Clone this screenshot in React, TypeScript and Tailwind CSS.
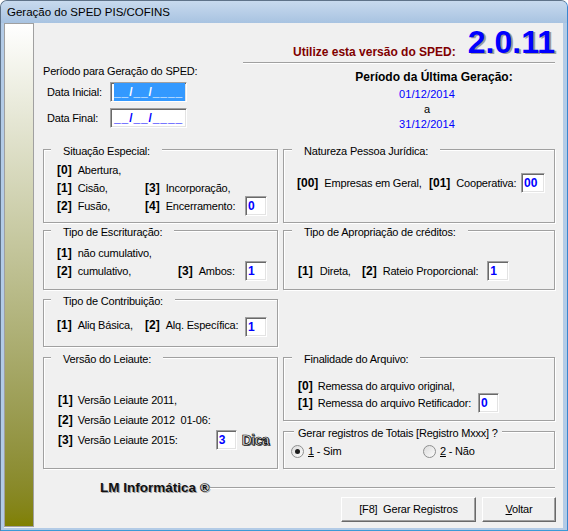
import type { ReactNode } from "react";

const fieldClass =
  "flex h-[20px] items-center border border-t-[#a0a0a0] border-l-[#a0a0a0] border-r-white border-b-white bg-white pl-[2px] text-[12px] font-bold tracking-normal text-[#0000ff] shadow-[inset_1px_1px_0_#696969,inset_-1px_-1px_0_#e3e3e3]";

const Bracket = ({ children }: { children: ReactNode }) => (
  <span className="text-[12px] font-bold tracking-normal">{children}</span>
);

const Opt = ({ k, label, gap = "gap-[6px]" }: { k: string; label: string; gap?: string }) => (
  <span className={`flex items-center whitespace-pre ${gap}`}>
    <Bracket>[{k}]</Bracket>
    <span>{label}</span>
  </span>
);

const Field = ({ value, width = "w-[22px]", className = "" }: { value: string; width?: string; className?: string }) => (
  <div className={`${fieldClass} ${width} ${className}`}>{value}</div>
);

type GroupProps = {
  title: string;
  className?: string;
  titleClass?: string;
  children?: ReactNode;
};

const Group = ({ title, className = "", titleClass = "left-[7px] px-[12px]", children }: GroupProps) => (
  <div
    className={`relative border border-[#a0a0a0] shadow-[1px_1px_0_#ffffff,inset_1px_1px_0_#ffffff] ${className}`}
  >
    <span className={`absolute -top-[6px] bg-[#f0f0f0] leading-[14px] whitespace-nowrap ${titleClass}`}>{title}</span>
    {children}
  </div>
);

const Radio = ({ checked }: { checked?: boolean }) => (
  <span className="flex h-[13px] w-[13px] items-center justify-center rounded-full border border-[#8e8f8f] bg-gradient-to-br from-[#dcdcdc] to-[#fbfbfb]">
    {checked && <span className="h-[5px] w-[5px] rounded-full bg-[#1c1c1c]" />}
  </span>
);

const Etched = ({ className = "" }: { className?: string }) => (
  <div className={`h-[2px] border-t border-b border-t-[#a0a0a0] border-b-white ${className}`} />
);

export default function App() {
  return (
    <div className="flex h-[531px] w-[568px] flex-col overflow-hidden rounded-t-[7px] border border-[#5f7389] border-r-[#3b86cf] border-b-[#3b9ad6] bg-[#b3cbe6] font-['Liberation_Sans',Arial,sans-serif] text-[11px] tracking-[-0.2px] text-black">
      {/* title bar */}
      <div className="flex h-[22px] shrink-0 items-center bg-gradient-to-b from-[#c8daee] to-[#a8c3e1] pl-[6px] pt-[1px] text-[11.5px] tracking-normal text-black">
        Geração do SPED PIS/COFINS
      </div>

      <div className="flex min-h-0 flex-1 pb-[2px] pl-[3px] pr-[4px]">
        <div className="flex flex-1 bg-[#f0f0f0]">
          <div className="mb-[1px] w-[30px] shrink-0 border border-[#a0a0a0] bg-gradient-to-b from-white to-[#808000]" />

          <div className="flex flex-1 flex-col pl-[9px] pr-[8px]">
            {/* header */}
            <div className="flex h-[126px] flex-col">
              <div className="flex h-[39px] items-start justify-end">
                <span className="mt-[23px] text-[12px] font-bold leading-none tracking-normal text-[#800000]">
                  Utilize esta versão do SPED:
                </span>
                <span className="ml-[12px] mt-[3px] text-[32px] font-bold leading-none tracking-normal text-[#0000ff] [text-shadow:2px_1px_0_#9c9c9c]">
                  2.0.11
                </span>
              </div>
              <Etched className="ml-[200px]" />
              <div className="flex">
                <div className="w-[235px]">
                  <div className="leading-[14px]">Período para Geração do SPED:</div>
                  <div className="mt-[4px] flex h-[20px] items-center pl-[4px]">
                    <span className="w-[63px]">Data Inicial:</span>
                    <div className={`${fieldClass} w-[77px]`}>
                      <span className="ml-[1px] bg-[#3399ff] pr-[2px] text-white tracking-[0.9px]">__/__/____</span>
                    </div>
                  </div>
                  <div className="mt-[6px] flex h-[20px] items-center pl-[4px]">
                    <span className="w-[63px]">Data Final:</span>
                    <div className={`${fieldClass} w-[77px]`}>
                      <span className="ml-[1px] tracking-[0.9px]">__/__/____</span>
                    </div>
                  </div>
                </div>
                <div className="flex flex-1 justify-end pr-[41px]">
                  <div className="mt-[6px] flex w-[160px] flex-col items-center">
                    <div className="text-[12px] font-bold leading-[15px] tracking-normal">Período da Última Geração:</div>
                    <div className="mt-[2px] flex flex-col items-center pr-[14px] leading-[15px] tracking-[0.1px] text-[#0000ff]">
                      <span>01/12/2014</span>
                      <span className="text-black">a</span>
                      <span>31/12/2014</span>
                    </div>
                  </div>
                </div>
              </div>
            </div>

            {/* row A */}
            <div className="flex gap-[5px]">
              <Group title="Situação Especial:" className="h-[74px] w-[235px] shrink-0">
                <div className="pl-[13px] pr-[10px] pt-[11px]">
                  <div className="flex h-[18px] items-center">
                    <Opt k="0" label="Abertura," />
                  </div>
                  <div className="flex h-[18px] items-center">
                    <div className="w-[88px]">
                      <Opt k="1" label="Cisão," />
                    </div>
                    <Opt k="3" label="Incorporação," />
                  </div>
                  <div className="flex h-[18px] items-center">
                    <div className="w-[88px]">
                      <Opt k="2" label="Fusão," />
                    </div>
                    <Opt k="4" label="Encerramento:" />
                    <Field value="0" className="ml-auto" />
                  </div>
                </div>
              </Group>
              <Group title="Natureza Pessoa Jurídica:" titleClass="left-[8px] px-[12px]" className="h-[74px] flex-1">
                <div className="mt-[24px] flex h-[18px] items-center pl-[13px] pr-[9px]">
                  <div className="w-[132px]">
                    <Opt k="00" label="Empresas em Geral," />
                  </div>
                  <Opt k="01" label="Cooperativa:" />
                  <Field value="00" width="w-[24px]" className="ml-auto" />
                </div>
              </Group>
            </div>

            {/* row B */}
            <div className="mt-[7px] flex gap-[5px]">
              <Group title="Tipo de Escrituração:" className="h-[60px] w-[235px] shrink-0">
                <div className="pl-[13px] pr-[10px] pt-[13px]">
                  <div className="flex h-[18px] items-center">
                    <Opt k="1" label="não cumulativo," />
                  </div>
                  <div className="flex h-[18px] items-center">
                    <div className="w-[121px]">
                      <Opt k="2" label="cumulativo," />
                    </div>
                    <Opt k="3" label="Ambos:" />
                    <Field value="1" className="ml-auto" />
                  </div>
                </div>
              </Group>
              <Group title="Tipo de Apropriação de créditos:" titleClass="left-[8px] px-[12px]" className="h-[60px] flex-1">
                <div className="mt-[31px] flex h-[18px] items-center pl-[14px]">
                  <div className="w-[64px]">
                    <Opt k="1" label="Direta," gap="gap-[7px]" />
                  </div>
                  <Opt k="2" label="Rateio Proporcional:" />
                  <Field value="1" className="ml-[9px]" />
                </div>
              </Group>
            </div>

            {/* rows C + D */}
            <div className="mt-[9px] flex gap-[5px]">
              <div className="flex w-[235px] shrink-0 flex-col">
                <Group title="Tipo de Contribuição:" className="h-[48px]">
                  <div className="mt-[16px] flex h-[18px] items-center pl-[13px] pr-[10px]">
                    <div className="w-[88px]">
                      <Opt k="1" label="Aliq Básica," />
                    </div>
                    <Opt k="2" label="Alq. Específica:" />
                    <Field value="1" className="ml-auto mt-[3px]" />
                  </div>
                </Group>
                <Group title="Versão do Leiaute:" className="mt-[10px] h-[112px]">
                  <div className="pl-[14px] pr-[8px] pt-[32px]">
                    <div className="flex h-[20px] items-center">
                      <Opt k="1" label="Versão Leiaute 2011," gap="gap-[5px]" />
                    </div>
                    <div className="flex h-[20px] items-center">
                      <Opt k="2" label="Versão Leiaute 2012  01-06:" gap="gap-[5px]" />
                    </div>
                    <div className="flex h-[20px] items-center">
                      <Opt k="3" label="Versão Leiaute 2015:" gap="gap-[5px]" />
                      <Field value="3" width="w-[21px]" className="ml-auto" />
                      <span className="ml-[5px] text-[14px] font-bold leading-none tracking-[-0.6px] text-[#e4e4e4] [-webkit-text-stroke:0.7px_#000] [text-shadow:1px_1px_0_#555]">
                        Dica
                      </span>
                    </div>
                  </div>
                </Group>
              </div>
              <div className="flex flex-1 flex-col pt-[58px]">
                <Group title="Finalidade do Arquivo:" titleClass="left-[8px] px-[12px]" className="h-[64px]">
                  <div className="pl-[14px] pt-[19px]">
                    <div className="flex h-[17.5px] items-center">
                      <Opt k="0" label="Remessa do arquivo original," gap="gap-[5px]" />
                    </div>
                    <div className="flex h-[17.5px] items-center">
                      <Opt k="1" label="Remessa do arquivo Retificador:" gap="gap-[5px]" />
                      <Field value="0" width="w-[21px]" className="ml-[7px]" />
                    </div>
                  </div>
                </Group>
                <Group
                  title="Gerar registros de Totais [Registro Mxxx] ?"
                  titleClass="left-[10px] px-[4px]"
                  className="mt-[10px] h-[38px]"
                >
                  <div className="mt-[10px] flex h-[18px] items-center pl-[7px]">
                    <div className="flex w-[132px] items-center gap-[4px]">
                      <Radio checked />
                      <span>
                        <span className="underline">1</span> - Sim
                      </span>
                    </div>
                    <div className="flex items-center gap-[4px]">
                      <Radio />
                      <span>
                        <span className="underline">2</span> - Não
                      </span>
                    </div>
                  </div>
                </Group>
              </div>
            </div>

            {/* footer */}
            <div className="mt-[10px] flex h-[18px] items-center pl-[57px]">
              <span className="text-[13.5px] font-bold tracking-normal text-[#111] [text-shadow:1px_1px_0_#a0a0a0]">
                LM Informática ®
              </span>
              <Etched className="flex-1" />
            </div>
            <div className="-mr-[1px] flex justify-end gap-[6px]">
              <button className="h-[25px] w-[135px] border border-t-white border-l-white border-r-[#696969] border-b-[#696969] bg-[#f0f0f0] whitespace-pre shadow-[inset_-1px_-1px_0_#a0a0a0]">
                [F8]  Gerar Registros
              </button>
              <button className="h-[25px] w-[74px] border border-t-white border-l-white border-r-[#696969] border-b-[#696969] bg-[#f0f0f0] shadow-[inset_-1px_-1px_0_#a0a0a0]">
                <span className="underline">V</span>oltar
              </button>
            </div>
          </div>
        </div>
      </div>
    </div>
  );
}
